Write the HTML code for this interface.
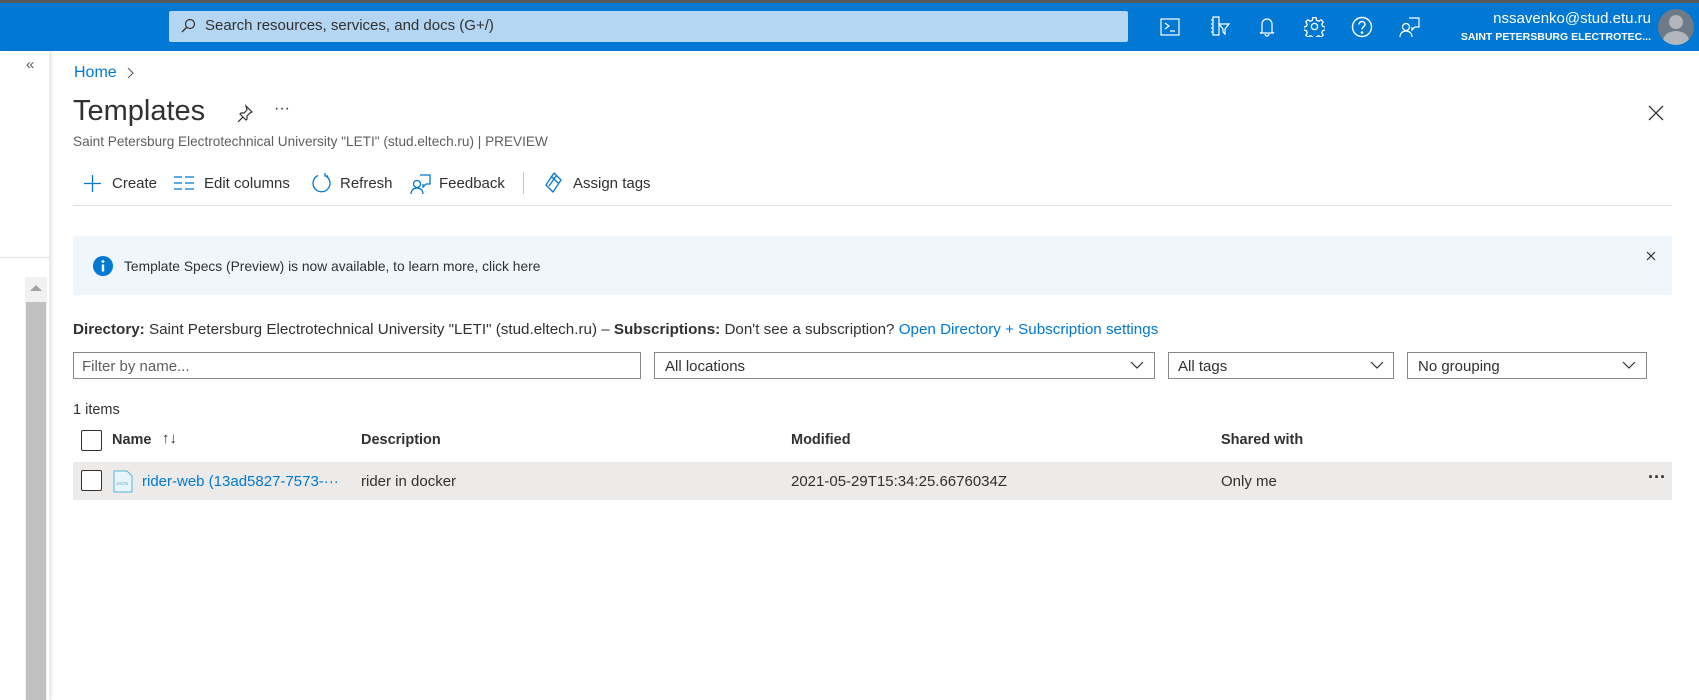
<!DOCTYPE html>
<html><head><meta charset="utf-8"><style>
*{box-sizing:border-box;margin:0;padding:0}
body{width:1699px;height:700px;overflow:hidden;background:#fff;font-family:"Liberation Sans",sans-serif;color:#323130;position:relative}
.a{position:absolute;white-space:nowrap}
svg{display:block}
</style></head><body>
<div class="a" style="left:0;top:0;width:1699px;height:3px;background:#5a5a5a"></div>
<div class="a" style="left:0;top:3px;width:1699px;height:48px;background:#0078d4"></div>
<div class="a" style="left:169px;top:11px;width:959px;height:31px;background:#b4d6f3;border-radius:2px"></div>
<svg class="a" style="left:180px;top:18px" width="16" height="16" viewBox="0 0 16 16"><circle cx="10" cy="6" r="4.5" fill="none" stroke="#333" stroke-width="1.2"/><path d="M7 9L2 14" stroke="#333" stroke-width="1.3"/></svg>
<div class="a" style="left:205px;top:17px;font-size:15px;color:#323130">Search resources, services, and docs (G+/)</div>
<svg class="a" style="left:1160px;top:17px" width="20" height="20" viewBox="0 0 20 20" fill="none" stroke="#fff" stroke-width="1.2"><rect x="1" y="2" width="18" height="16"/><path d="M5 6l4 3-4 3M10 14h5"/></svg>
<svg class="a" style="left:1209px;top:15px" width="22" height="22" viewBox="0 0 22 22" fill="none" stroke="#fff" stroke-width="1.2"><path d="M4 2h6v18H4zM2 5h2M2 9h2M2 13h2M2 17h2M10 9h10l-4 5v5l-2-2v-3z"/></svg>
<svg class="a" style="left:1258px;top:16px" width="18" height="22" viewBox="0 0 18 22" fill="none" stroke="#fff" stroke-width="1.2"><path d="M4 16V8a5 5 0 0110 0v8l2 1H2zM7 18a2 2 0 004 0"/></svg>
<svg class="a" style="left:1304px;top:16px" width="21" height="21" viewBox="0 0 20 20" fill="none" stroke="#fff" stroke-width="1.2"><circle cx="10" cy="10" r="3"/><path d="M8.5 1.5h3l.5 2.5 2 1 2.2-1.4 2.1 2.1-1.4 2.2 1 2 2.5.5v3l-2.5.5-1 2 1.4 2.2-2.1 2.1-2.2-1.4-2 1-.5 2.5h-3l-.5-2.5-2-1-2.2 1.4-2.1-2.1 1.4-2.2-1-2-2.5-.5v-3l2.5-.5 1-2-1.4-2.2 2.1-2.1 2.2 1.4 2-1z"/></svg>
<svg class="a" style="left:1351px;top:16px" width="22" height="22" viewBox="0 0 22 22" fill="none" stroke="#fff" stroke-width="1.4"><circle cx="11" cy="11" r="9.5"/><path d="M8 8.5a3 3 0 116 0c0 2-3 2.5-3 5"/><circle cx="11" cy="16.5" r=".6" fill="#fff"/></svg>
<svg class="a" style="left:1399px;top:16px" width="22" height="22" viewBox="0 0 22 22" fill="none" stroke="#fff" stroke-width="1.2"><circle cx="7" cy="11" r="3.5"/><path d="M1 21c0-4 3-6 6-6s6 2 6 6M10 2h10v9h-4l-3 3v-3"/></svg>
<div class="a" style="right:48px;top:10px;font-size:15px;color:#fff">nssavenko@stud.etu.ru</div>
<div class="a" style="right:48px;top:31px;font-size:10.5px;font-weight:bold;color:#fff">SAINT PETERSBURG ELECTROTEC...</div>
<div class="a" style="left:1658px;top:9px;width:36px;height:36px;border-radius:50%;background:#6e7a88;overflow:hidden"><div class="a" style="left:11px;top:6px;width:14px;height:14px;border-radius:50%;background:#b3b7bd"></div><div class="a" style="left:5px;top:22px;width:26px;height:20px;border-radius:50%;background:#b3b7bd"></div></div>
<div class="a" style="left:0;top:51px;width:49px;height:649px;background:#fff;box-shadow:2px 0 4px rgba(0,0,0,.12)"></div>
<div class="a" style="left:26px;top:56px;font-size:15px;color:#605e5c">«</div>
<div class="a" style="left:0;top:257px;width:49px;height:1px;background:#e1dfdd"></div>
<div class="a" style="left:25px;top:277px;width:22px;height:423px;background:#f1f1f1"></div>
<div class="a" style="left:30px;top:285px;width:0;height:0;border-left:6px solid transparent;border-right:6px solid transparent;border-bottom:6px solid #a3a3a3"></div>
<div class="a" style="left:26px;top:302px;width:20px;height:398px;background:#c1c1c1"></div>
<div class="a" style="left:74px;top:64px;font-size:16px;color:#0078d4">Home</div>
<svg class="a" style="left:127px;top:67px" width="8" height="12" viewBox="0 0 8 12"><path d="M1 1l5 5-5 5" fill="none" stroke="#605e5c" stroke-width="1.1"/></svg>
<div class="a" style="left:73px;top:95px;font-size:29px;color:#323130">Templates</div>
<svg class="a" style="left:236px;top:104px" width="18" height="18" viewBox="0 0 18 18" fill="none" stroke="#323130" stroke-width="1.2"><path d="M10 2l6 6-2 1-3 3 0 3-1 1-3-3-5 5 5-5-3-3 1-1 3 0 3-3z"/></svg>
<div class="a" style="left:274px;top:100px;font-size:16px;color:#323130">···</div>
<svg class="a" style="left:1648px;top:105px" width="16" height="16" viewBox="0 0 16 16"><path d="M1 1l14 14M15 1L1 15" stroke="#323130" stroke-width="1.3"/></svg>
<div class="a" style="left:73px;top:134px;font-size:13.6px;color:#605e5c">Saint Petersburg Electrotechnical University "LETI" (stud.eltech.ru) | PREVIEW</div>
<svg class="a" style="left:83px;top:174px" width="19" height="19" viewBox="0 0 19 19"><path d="M9.5 1v17M1 9.5h17" stroke="#0078d4" stroke-width="1.3"/></svg>
<div class="a" style="left:112px;top:175px;font-size:15px">Create</div>
<svg class="a" style="left:174px;top:176px" width="20" height="14" viewBox="0 0 20 14"><path d="M0 1h8M0 7h8M0 13h8M11 1h9M11 7h9M11 13h9" stroke="#0078d4" stroke-width="1.3"/></svg>
<div class="a" style="left:204px;top:175px;font-size:15px">Edit columns</div>
<svg class="a" style="left:311px;top:172px" width="21" height="22" viewBox="0 0 21 22" fill="none" stroke="#0078d4" stroke-width="1.3"><path d="M7 3.5A8.5 8.5 0 1014 3.5M14 1v3h3"/></svg>
<div class="a" style="left:340px;top:175px;font-size:15px">Refresh</div>
<svg class="a" style="left:410px;top:173px" width="22" height="22" viewBox="0 0 22 22" fill="none" stroke="#0078d4" stroke-width="1.3"><circle cx="7" cy="11" r="3.5"/><path d="M1 21c0-4 3-6 6-6s6 2 6 6M10 2h10v9h-4l-3 3v-3"/></svg>
<div class="a" style="left:439px;top:175px;font-size:15px">Feedback</div>
<div class="a" style="left:523px;top:172px;width:1px;height:22px;background:#c8c6c4"></div>
<svg class="a" style="left:545px;top:172px" width="18" height="22" viewBox="0 0 18 22" fill="none" stroke="#0078d4" stroke-width="1.3"><path d="M9 1l7 7-8 12-7-7zM6 4l7 7M11 4l-7 10"/></svg>
<div class="a" style="left:573px;top:175px;font-size:15px">Assign tags</div>
<div class="a" style="left:73px;top:205px;width:1599px;height:1px;background:#e1dfdd"></div>
<div class="a" style="left:73px;top:236px;width:1599px;height:59px;background:#eff6fc"></div>
<svg class="a" style="left:93px;top:256px" width="20" height="20" viewBox="0 0 20 20"><circle cx="10" cy="10" r="10" fill="#0078d4"/><rect x="8.8" y="8.5" width="2.4" height="7" fill="#fff"/><circle cx="10" cy="5.5" r="1.4" fill="#fff"/></svg>
<div class="a" style="left:124px;top:259px;font-size:13.8px">Template Specs (Preview) is now available, to learn more, click here</div>
<svg class="a" style="left:1646px;top:251px" width="10" height="10" viewBox="0 0 10 10"><path d="M1 1l8 8M9 1L1 9" stroke="#323130" stroke-width="1.2"/></svg>
<div class="a" style="left:73px;top:321px;font-size:15.2px"><b>Directory:</b> Saint Petersburg Electrotechnical University "LETI" (stud.eltech.ru) – <b>Subscriptions:</b> Don't see a subscription? <span style="color:#0078d4">Open Directory + Subscription settings</span></div>
<div class="a" style="left:73px;top:352px;width:568px;height:27px;border:1px solid #8a8886"></div>
<div class="a" style="left:82px;top:358px;font-size:15px;color:#605e5c">Filter by name...</div>
<div class="a" style="left:654px;top:352px;width:501px;height:27px;border:1px solid #8a8886"></div>
<div class="a" style="left:665px;top:358px;font-size:15px">All locations</div>
<div class="a" style="left:1168px;top:352px;width:226px;height:27px;border:1px solid #8a8886"></div>
<div class="a" style="left:1178px;top:358px;font-size:15px">All tags</div>
<div class="a" style="left:1407px;top:352px;width:240px;height:27px;border:1px solid #8a8886"></div>
<div class="a" style="left:1418px;top:358px;font-size:15px">No grouping</div>
<svg class="a" style="left:1130px;top:361px" width="14" height="8" viewBox="0 0 14 8"><path d="M1 1l6 6 6-6" fill="none" stroke="#323130" stroke-width="1.2"/></svg>
<svg class="a" style="left:1370px;top:361px" width="14" height="8" viewBox="0 0 14 8"><path d="M1 1l6 6 6-6" fill="none" stroke="#323130" stroke-width="1.2"/></svg>
<svg class="a" style="left:1622px;top:361px" width="14" height="8" viewBox="0 0 14 8"><path d="M1 1l6 6 6-6" fill="none" stroke="#323130" stroke-width="1.2"/></svg>
<div class="a" style="left:73px;top:402px;font-size:14.5px">1 items</div>
<div class="a" style="left:81px;top:430px;width:21px;height:21px;border:1.5px solid #323130;border-radius:2px"></div>
<div class="a" style="left:112px;top:432px;font-size:14.5px;font-weight:bold">Name</div>
<div class="a" style="left:162px;top:430px;font-size:15px">↑↓</div>
<div class="a" style="left:361px;top:432px;font-size:14.5px;font-weight:bold">Description</div>
<div class="a" style="left:791px;top:432px;font-size:14.5px;font-weight:bold">Modified</div>
<div class="a" style="left:1221px;top:432px;font-size:14.5px;font-weight:bold">Shared with</div>
<div class="a" style="left:73px;top:462px;width:1599px;height:38px;background:#edebe9"></div>
<div class="a" style="left:81px;top:470px;width:21px;height:21px;border:1.5px solid #323130;border-radius:2px;background:#fff"></div>
<svg class="a" style="left:113px;top:470px" width="20" height="23" viewBox="0 0 20 23"><path d="M1 1h13l5 5v16H1z" fill="#e8f4fb" stroke="#59b4d9"/><text x="3" y="15" font-size="4.5" fill="#59b4d9" font-family="Liberation Sans">JSON</text></svg>
<div class="a" style="left:142px;top:473px;font-size:15px;color:#0078d4">rider-web (13ad5827-7573-···</div>
<div class="a" style="left:361px;top:473px;font-size:15px">rider in docker</div>
<div class="a" style="left:791px;top:473px;font-size:15px">2021-05-29T15:34:25.6676034Z</div>
<div class="a" style="left:1221px;top:473px;font-size:15px">Only me</div>
<div class="a" style="left:1648px;top:467px;font-size:18px;font-weight:bold;color:#323130">···</div>
</body></html>
